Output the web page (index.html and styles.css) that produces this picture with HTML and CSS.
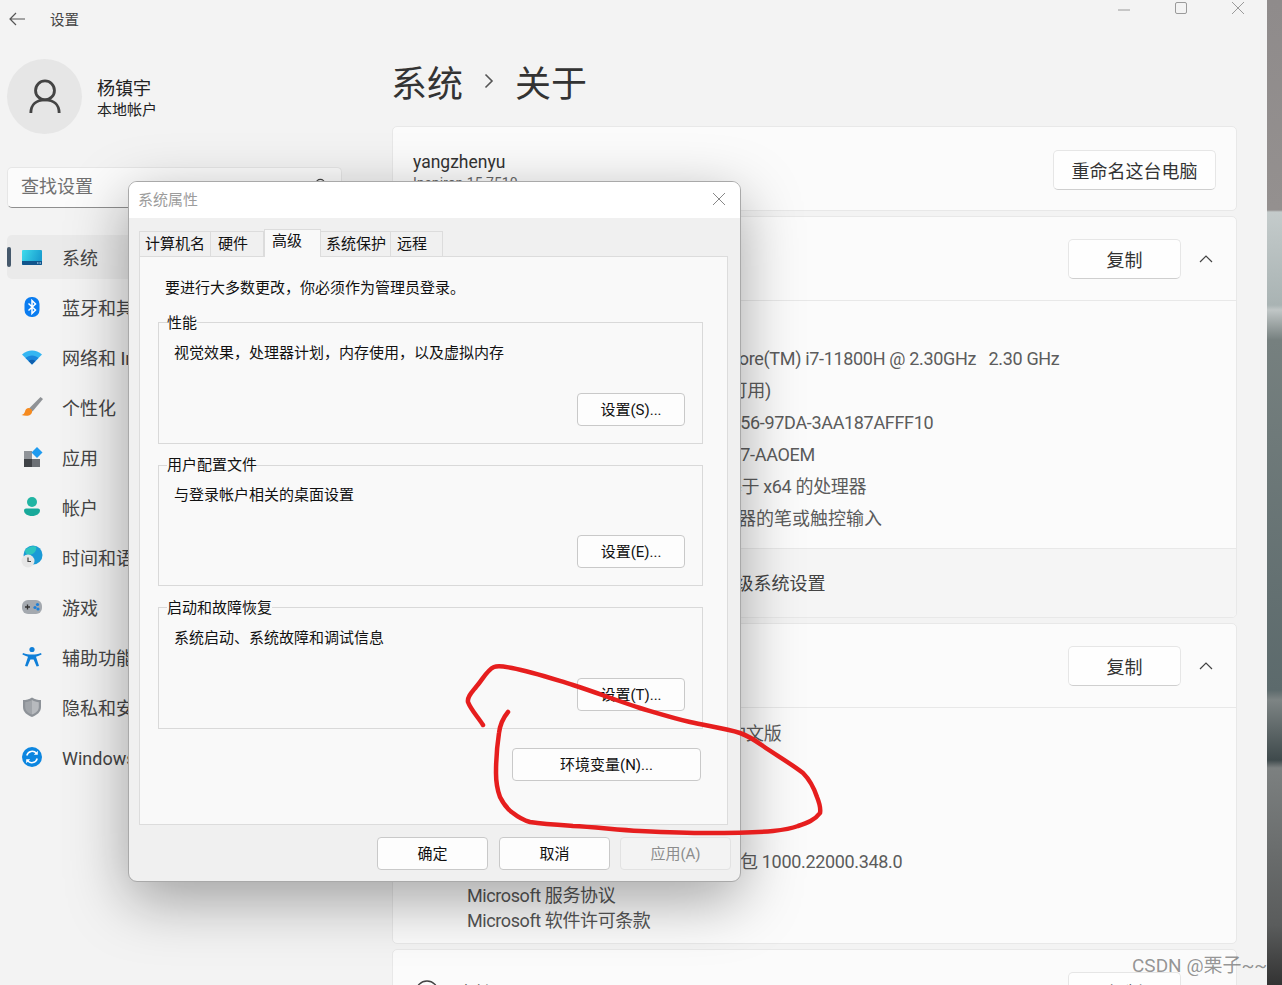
FILE: index.html
```html
<!DOCTYPE html>
<html lang="zh-CN">
<head>
    <meta charset="UTF-8">
    <title>设置 - 系统属性</title>
    <link rel="stylesheet" href="styles.css">
</head>
<body>
<div class="desktop">
    <div class="window">
        <aside class="sidebar">
            <div class="app-bar">
                <svg class="back-icon" viewBox="0 0 16 14" width="16" height="14"><path d="M7 1 1 7l6 6M1 7h15" fill="none" stroke="#555" stroke-width="1.2"/></svg>
                <span>设置</span>
            </div>
            <div class="profile">
                <div class="avatar">
                    <svg viewBox="0 0 36 40" width="34" height="38"><circle cx="18" cy="13" r="10" fill="none" stroke="#444" stroke-width="3"/><path d="M3 37c0-9 6-14 15-14s15 5 15 14" fill="none" stroke="#444" stroke-width="3"/></svg>
                </div>
                <div class="profile-text">
                    <div class="profile-name">杨镇宇</div>
                    <div class="profile-type">本地帐户</div>
                </div>
            </div>
            <div class="search">
                <span>查找设置</span>
                <svg viewBox="0 0 16 16" width="14" height="14"><circle cx="9.5" cy="6.5" r="5" fill="none" stroke="#444" stroke-width="1.4"/><path d="M6 10.5 1.5 15" stroke="#444" stroke-width="1.4"/></svg>
            </div>
            <nav class="nav">
                <div class="nav-item active">
                    <svg viewBox="0 0 24 24" width="24" height="24"><defs><linearGradient id="sys" x1="0" y1="0" x2="1" y2="0.3"><stop offset="0" stop-color="#3fdcec"/><stop offset="1" stop-color="#1a9fd0"/></linearGradient></defs><rect x="2" y="5" width="20" height="15" rx="1" fill="url(#sys)"/><path d="M2 16h20v3a1 1 0 0 1-1 1H3a1 1 0 0 1-1-1z" fill="#11558c"/><path d="M17 18h1.500M19.500 18H21" stroke="#cfe8f5" stroke-width="1"/></svg>
                    <span>系统</span>
                </div>
                <div class="nav-item">
                    <svg viewBox="0 0 24 24" width="24" height="24"><rect x="4.500" y="2" width="15" height="20" rx="7" fill="#0a7cf0"/><path d="M8.500 8.500 15.500 15 12 18.500v-13L15.500 9 8.500 15.500" fill="none" stroke="#fff" stroke-width="1.500"/></svg>
                    <span>蓝牙和其他设备</span>
                </div>
                <div class="nav-item">
                    <svg viewBox="0 0 24 24" width="24" height="24"><path d="M2 9.500C8 4 16 4 22 9.500L12 19.500z" fill="#35b6f2"/><path d="M5.500 13C9 9.500 15 9.500 18.500 13L12 19.500z" fill="#1a86dc"/><path d="M8.500 16c2-1.800 5-1.800 7 0L12 19.500z" fill="#0f5fae"/></svg>
                    <span>网络和 Internet</span>
                </div>
                <div class="nav-item">
                    <svg viewBox="0 0 24 24" width="24" height="24"><path d="M20.500 2 23 4 12.500 16.500 9 13.500z" fill="#8f9296"/><path d="M9 13c-2.500 0-3.500 1.500-4 3.500-.3 1.500-1.500 3-3.500 3.500 4 1.500 9 1 10.300-2 .7-1.800 0-3.500-.8-4z" fill="#f58a1f"/></svg>
                    <span>个性化</span>
                </div>
                <div class="nav-item">
                    <svg viewBox="0 0 24 24" width="24" height="24"><rect x="4" y="6" width="8" height="8" fill="#8f9398"/><rect x="4" y="14" width="8" height="8" fill="#3f4246"/><rect x="12" y="14" width="8" height="8" fill="#6c7075"/><path d="M17 2l5.500 5.500L17 13l-5.500-5.500z" fill="#1f9bf0"/></svg>
                    <span>应用</span>
                </div>
                <div class="nav-item">
                    <svg viewBox="0 0 24 24" width="24" height="24"><circle cx="12" cy="7" r="5" fill="#21b5a3"/><path d="M4 15.500a2 2 0 0 1 2-2h12a2 2 0 0 1 2 2c0 3-3.500 5.500-8 5.500s-8-2.500-8-5.500z" fill="#18a99a"/></svg>
                    <span>帐户</span>
                </div>
                <div class="nav-item">
                    <svg viewBox="0 0 24 24" width="24" height="24"><circle cx="13" cy="10" r="9.500" fill="#1b9ad6"/><path d="M5 5c3-3 8-4.500 11-3.500 1 3-1 7-5 8-3 .7-6 0-6-4.500z" fill="#2dc4c0"/><circle cx="8" cy="16" r="6.500" fill="#e6e6e6"/><path d="M8 12.500V16.500h3" fill="none" stroke="#444" stroke-width="1.200"/></svg>
                    <span>时间和语言</span>
                </div>
                <div class="nav-item">
                    <svg viewBox="0 0 24 24" width="24" height="24"><rect x="2" y="5" width="20" height="14" rx="6" fill="#a4a9af"/><path d="M5 12h5M7.500 9.500v5" stroke="#333" stroke-width="1.300"/><circle cx="17.500" cy="9.500" r="1.600" fill="#1f7fd6"/><circle cx="15" cy="12.500" r="1.600" fill="#1f7fd6"/><circle cx="18" cy="14" r="1.600" fill="#1f7fd6"/></svg>
                    <span>游戏</span>
                </div>
                <div class="nav-item">
                    <svg viewBox="0 0 24 24" width="24" height="24"><circle cx="12" cy="4.500" r="2.600" fill="#0f7fd8"/><path d="M3 8c3 1 5.500 1.500 9 1.500S18 9 21 8l.6 1.600c-2 1-3.800 1.700-5.600 2.100l3 9.300-2.400.6-3-7h-3.200l-3 7L5 21l3-9.300C6.200 11.300 4.400 10.600 2.400 9.600z" fill="#0f7fd8"/></svg>
                    <span>辅助功能</span>
                </div>
                <div class="nav-item">
                    <svg viewBox="0 0 24 24" width="24" height="24"><path d="M12 2.500c3 2 6 2.500 9 2.500v7c0 5-4 8-9 10-5-2-9-5-9-10V5c3 0 6-.5 9-2.500z" fill="#8d9298"/><path d="M12 5c2.500 1.500 4.500 2 6.800 2.200V12c0 3.800-3 6-6.800 7.600z" fill="#b7babe"/><path d="M12 5C9.500 6.500 7.500 7 5.200 7.200V12c0 3.800 3 6 6.800 7.600z" fill="#a1a5aa"/></svg>
                    <span>隐私和安全性</span>
                </div>
                <div class="nav-item">
                    <svg viewBox="0 0 24 24" width="24" height="24"><circle cx="12" cy="12" r="10" fill="#0c86e0"/><path d="M6.800 10.500A5.500 5.500 0 0 1 16.500 8.500M17.200 13.500A5.500 5.500 0 0 1 7.500 15.500" fill="none" stroke="#fff" stroke-width="1.500"/><path d="M17.800 5.800v4h-4zM6.200 18.200v-4h4z" fill="#fff"/></svg>
                    <span>Windows 更新</span>
                </div>
            </nav>
        </aside>

        <main class="main">
            <div class="window-controls">
                <svg viewBox="0 0 12 12" width="12" height="12"><path d="M0 8h12" stroke="#9a9a9a"/></svg>
                <svg viewBox="0 0 12 12" width="12" height="12"><rect x=".5" y=".5" width="11" height="11" rx="1.500" fill="none" stroke="#9a9a9a"/></svg>
                <svg viewBox="0 0 12 12" width="12" height="12"><path d="M0 0l12 12M12 0 0 12" stroke="#9a9a9a"/></svg>
            </div>
            <h1 class="page-title">
                <span>系统</span>
                <svg viewBox="0 0 10 16" width="10" height="16"><path d="M1.500 1.500 8 8l-6.500 6.500" fill="none" stroke="#555" stroke-width="1.600"/></svg>
                <span>关于</span>
            </h1>

            <section class="card card-device">
                <div>
                    <div class="device-name">yangzhenyu</div>
                    <div class="device-model">Inspiron 15 7510</div>
                </div>
                <button class="win-btn rename-btn">重命名这台电脑</button>
            </section>

            <section class="card card-specs">
                <div class="card-head">
                    <span class="card-title">设备规格</span>
                    <button class="win-btn copy-btn">复制</button>
                    <svg viewBox="0 0 14 8" width="14" height="8"><path d="M1 7l6-6 6 6" fill="none" stroke="#444" stroke-width="1.200"/></svg>
                </div>
                <div class="spec-list specs-device">
                    <div class="spec tight">11th Gen Intel(R) Core(TM) i7-11800H @ 2.30GHz&nbsp;&nbsp; 2.30 GHz</div>
                    <div class="spec tight">16.0 GB (15.7 GB 可用)</div>
                    <div class="spec tight">00000000-0000-4256-97DA-3AA187AFFF10</div>
                    <div class="spec tight">00000-00000-00047-AAOEM</div>
                    <div class="spec tight">64 位操作系统，基于 x64 的处理器</div>
                    <div class="spec">没有可用于此显示器的笔或触控输入</div>
                </div>
                <div class="related">相关链接 域或工作组 系统保护 高级系统设置</div>
            </section>

            <section class="card card-specs">
                <div class="card-head">
                    <span class="card-title">Windows 规格</span>
                    <button class="win-btn copy-btn">复制</button>
                    <svg viewBox="0 0 14 8" width="14" height="8"><path d="M1 7l6-6 6 6" fill="none" stroke="#444" stroke-width="1.200"/></svg>
                </div>
                <div class="spec-list specs-windows">
                    <div class="spec tight">Windows 11 家庭中文版</div>
                    <div class="spec spec-experience tight">Windows 功能体验包 1000.22000.348.0</div>
                </div>
                <div class="legal">
                    <div>Microsoft 服务协议</div>
                    <div>Microsoft 软件许可条款</div>
                </div>
            </section>

            <section class="card">
                <div class="card-head">
                    <svg class="help-icon" viewBox="0 0 24 24" width="24" height="24"><circle cx="12" cy="12" r="11" fill="none" stroke="#444" stroke-width="1.300"/></svg>
                    <span class="help-title">支持</span>
                    <button class="win-btn copy-btn">复制</button>
                    <svg viewBox="0 0 14 8" width="14" height="8"><path d="M1 7l6-6 6 6" fill="none" stroke="#444" stroke-width="1.200"/></svg>
                </div>
            </section>
        </main>
    </div>
    <div class="wallpaper"></div>

    <div class="dialog">
        <div class="dialog-title">
            <span>系统属性</span>
            <svg viewBox="0 0 12 12" width="12" height="12"><path d="M0 0l12 12M12 0 0 12" stroke="#888"/></svg>
        </div>
        <div class="tabs">
            <div class="tab">计算机名</div>
            <div class="tab tab-hw">硬件</div>
            <div class="tab active">高级</div>
            <div class="tab tab-protect">系统保护</div>
            <div class="tab tab-remote">远程</div>
        </div>
        <div class="panel">
            <p class="intro">要进行大多数更改，你必须作为管理员登录。</p>
            <fieldset class="group">
                <legend>性能</legend>
                <p>视觉效果，处理器计划，内存使用，以及虚拟内存</p>
                <button class="dlg-btn group-btn">设置(S)...</button>
            </fieldset>
            <fieldset class="group">
                <legend>用户配置文件</legend>
                <p>与登录帐户相关的桌面设置</p>
                <button class="dlg-btn group-btn">设置(E)...</button>
            </fieldset>
            <fieldset class="group">
                <legend>启动和故障恢复</legend>
                <p>系统启动、系统故障和调试信息</p>
                <button class="dlg-btn group-btn">设置(T)...</button>
            </fieldset>
            <button class="dlg-btn env-btn">环境变量(N)...</button>
        </div>
        <div class="dialog-foot">
            <button class="dlg-btn ok-btn">确定</button>
            <button class="dlg-btn">取消</button>
            <button class="dlg-btn disabled">应用(A)</button>
        </div>
    </div>

    <svg class="scribble" viewBox="0 0 1282 985" width="1282" height="985">
        <path d="M483 725C478 717 471 710 468 702C467 697 472 692 476 687C483 679 487 670 494 667C499 665 506 667 512 668C533 672 553 679 573 685C595 692 618 701 640 708C657 713 673 718 690 722C707 726 725 728 740 733C749 736 756 741 763 746C776 755 790 763 803 773C810 780 814 788 817 797C819 802 821 808 820 813C815 820 807 823 798 826C790 829 782 830 773 831C751 833 729 833 707 833C685 833 662 832 640 831C618 830 595 827 573 826C559 825 544 824 530 822C523 820 518 817 513 813C507 809 503 803 500 797C497 789 496 781 496 773C496 760 497 746 499 733C500 725 503 718 508 712" fill="none" stroke="#e61e1e" stroke-width="4.500" stroke-linecap="round" stroke-linejoin="round"/>
    </svg>
    <div class="watermark">CSDN @栗子~~</div>
</div>
</body>
</html>
```

FILE: styles.css
```css
* {
    box-sizing: border-box;
}

body {
    margin: 0;
    font-family: Roboto, "Noto Sans CJK SC", sans-serif;
    color: #444;
}

p {
    margin: 0;
}

button {
    font-family: inherit;
}

.desktop {
    position: relative;
    width: 1282px;
    height: 985px;
    overflow: hidden;
    display: flex;
}

.window {
    width: 1267px;
    height: 985px;
    background: #f3f3f3;
    display: flex;
    overflow: hidden;
}

.wallpaper {
    width: 15px;
    background: linear-gradient(to bottom, #8f8b8b 0, #94908f 210px, #c4cbcb 212px, #a9b3b3 305px, #c0c6c6 310px, #76807f 340px, #5c6a6c 690px, #7d8484 700px, #3f4a4c 760px, #7c8080 768px, #5a5c5c 925px, #333 985px);
}

/* sidebar */
.sidebar {
    width: 392px;
    flex: none;
    padding-left: 7px;
}

.app-bar {
    height: 40px;
    display: flex;
    align-items: center;
    gap: 25px;
    padding: 0 0 3px 2px;
    font-size: 14.500px;
}

.profile {
    margin-top: 19px;
    display: flex;
    align-items: center;
    gap: 15px;
    color: #222;
}

.profile-text {
    padding-top: 3px;
}

.avatar {
    width: 75px;
    height: 75px;
    border-radius: 50%;
    background: #e6e6e6;
    display: flex;
    align-items: center;
    justify-content: center;
}

.profile-name {
    font-size: 18px;
    line-height: 24px;
}

.profile-type {
    font-size: 15px;
    line-height: 19px;
}

.search {
    margin-top: 33px;
    width: 335px;
    height: 41px;
    padding: 0 15px 6px 13px;
    background: #fbfbfb;
    border: 1px solid #e6e6e6;
    border-bottom-color: #8f8f8f;
    border-radius: 5px;
    font-size: 18px;
    color: #707070;
    display: flex;
    align-items: center;
    justify-content: space-between;
}

.nav {
    margin-top: 27px;
}

.nav-item {
    position: relative;
    height: 44px;
    margin: 3px 0 6px;
    padding-left: 13px;
    display: flex;
    align-items: center;
    gap: 18px;
    font-size: 18px;
    border-radius: 5px;
}

.nav-item.active {
    background: #eaeaea;
}

.nav-item.active::before {
    content: "";
    position: absolute;
    left: 0;
    top: 12px;
    width: 4px;
    height: 20px;
    border-radius: 2px;
    background: #46596c;
}

/* main column */
.main {
    flex: 1;
    padding-right: 30px;
}

.window-controls {
    height: 16px;
    margin-right: -7px;
    padding-top: 2px;
    display: flex;
    justify-content: flex-end;
    gap: 45px;
}

.page-title {
    margin: 40px 0 20px -1px;
    height: 50px;
    display: flex;
    align-items: center;
    gap: 21px;
    font-size: 36px;
    font-weight: 400;
    color: #333;
}

.card {
    margin-bottom: 5px;
    background: #fbfbfb;
    border: 1px solid #e8e8e8;
    border-radius: 5px;
    overflow: hidden;
}

.card-device {
    height: 85px;
    padding: 2px 20px 0;
    display: flex;
    align-items: center;
    justify-content: space-between;
}

.device-name {
    font-size: 17.500px;
    line-height: 22px;
    color: #333;
    margin-top: 5px;
}

.device-model {
    font-size: 14px;
    line-height: 20px;
    color: #666;
}

.card-head {
    height: 84px;
    padding: 1px 23px 0 74px;
    display: flex;
    align-items: center;
    gap: 18px;
    border-bottom: 1px solid #e8e8e8;
}

.card-title {
    flex: 1;
    font-size: 18px;
}

.help-title {
    flex: 1;
    font-size: 18px;
}

.help-icon {
    margin-left: -52px;
}

.win-btn {
    height: 40px;
    background: #fefefe;
    border: 1px solid #e6e6e6;
    border-bottom-color: #cfcfcf;
    border-radius: 5px;
    font-size: 18px;
    color: #333;
}

.rename-btn {
    width: 163px;
}

.copy-btn {
    width: 113px;
}

.spec-list {
    padding-left: 201px;
    font-size: 18px;
    color: #5c5c5c;
}

.specs-device {
    padding-top: 42px;
    padding-bottom: 13px;
}

.specs-windows {
    padding-top: 10px;
}

.spec {
    height: 32px;
    line-height: 32px;
    white-space: nowrap;
}

.spec.tight {
    letter-spacing: -0.33px;
}

.spec-experience {
    margin-top: 96px;
}

.related {
    height: 69px;
    padding: 0 0 3px 74px;
    display: flex;
    align-items: center;
    background: #f5f5f5;
    border-top: 1px solid #e8e8e8;
    font-size: 18px;
    color: #444;
    word-spacing: 1px;
}

.legal {
    padding: 5px 0 10px 74px;
    font-size: 18px;
    line-height: 25px;
    letter-spacing: -0.4px;
    color: #555;
}

/* system properties dialog */
.dialog {
    position: absolute;
    left: 128px;
    top: 181px;
    width: 613px;
    height: 701px;
    background: #f0f0f0;
    border: 1px solid #a9a9a9;
    border-radius: 9px;
    overflow: hidden;
    font-size: 15px;
    color: #111;
    z-index: 2;
    box-shadow: 0 18px 60px rgba(0, 0, 0, 0.35);
}

.dialog-title {
    height: 36px;
    padding: 0 15px 3px 9px;
    background: #fff;
    display: flex;
    align-items: center;
    justify-content: space-between;
    color: #9c9c9c;
}

.tabs {
    height: 38px;
    margin-left: 10px;
    padding-top: 11px;
    display: flex;
    align-items: flex-end;
    position: relative;
    z-index: 1;
}

.tab {
    width: 72px;
    height: 25px;
    padding-left: 5px;
    background: #f0f0f0;
    border: 1px solid #dcdcdc;
    border-bottom: 0;
    line-height: 24px;
}

.tab-hw {
    width: 53px;
    padding-left: 7px;
    border-left: 0;
}

.tab.active {
    width: 57px;
    height: 28px;
    margin-bottom: -1px;
    padding: 0 0 0 7px;
    background: #f9f9f9;
    line-height: 22px;
}

.tab-protect {
    width: 70px;
    padding-left: 5px;
    border-left: 0;
}

.tab-remote {
    width: 52px;
    padding-left: 6px;
    border-left: 0;
}

.panel {
    width: 589px;
    height: 569px;
    margin-left: 10px;
    padding: 20px 24px 0 18px;
    background: #f9f9f9;
    border: 1px solid #dcdcdc;
    display: flow-root;
}

.intro {
    padding-left: 7px;
    line-height: 22px;
    margin-bottom: 13.500px;
}

.group {
    margin: 0 0 11.500px;
    padding: 0 17px 17px 15px;
    min-width: 0;
    border: 1px solid #d9d9d9;
}

.group legend {
    margin-left: -7px;
    padding: 0;
    line-height: 20px;
}

.group p {
    margin-top: 9px;
    line-height: 22px;
}

.dlg-btn {
    width: 111px;
    height: 33px;
    padding: 0 0 2px;
    background: #fdfdfd;
    border: 1px solid #c9c9c9;
    border-radius: 4px;
    font-size: 15px;
    color: #111;
}

.dlg-btn.disabled {
    background: #f3f3f3;
    border-color: #e2e2e2;
    color: #8c8c8c;
}

.group-btn {
    display: block;
    width: 108px;
    margin: 29px 0 0 auto;
}

.env-btn {
    display: block;
    width: 189px;
    margin: 19px 2px 0 auto;
}

.dialog-foot {
    padding: 12px 9px 0 0;
    display: flex;
    justify-content: flex-end;
    gap: 10px;
}

.ok-btn {
    margin-right: 1px;
}

/* things drawn over the screenshot */
.scribble {
    position: absolute;
    left: 0;
    top: 0;
    z-index: 3;
}

.watermark {
    position: absolute;
    left: 1132px;
    top: 954px;
    font-size: 19px;
    line-height: 24px;
    color: rgba(90, 90, 90, 0.65);
    white-space: nowrap;
    z-index: 4;
}
```
